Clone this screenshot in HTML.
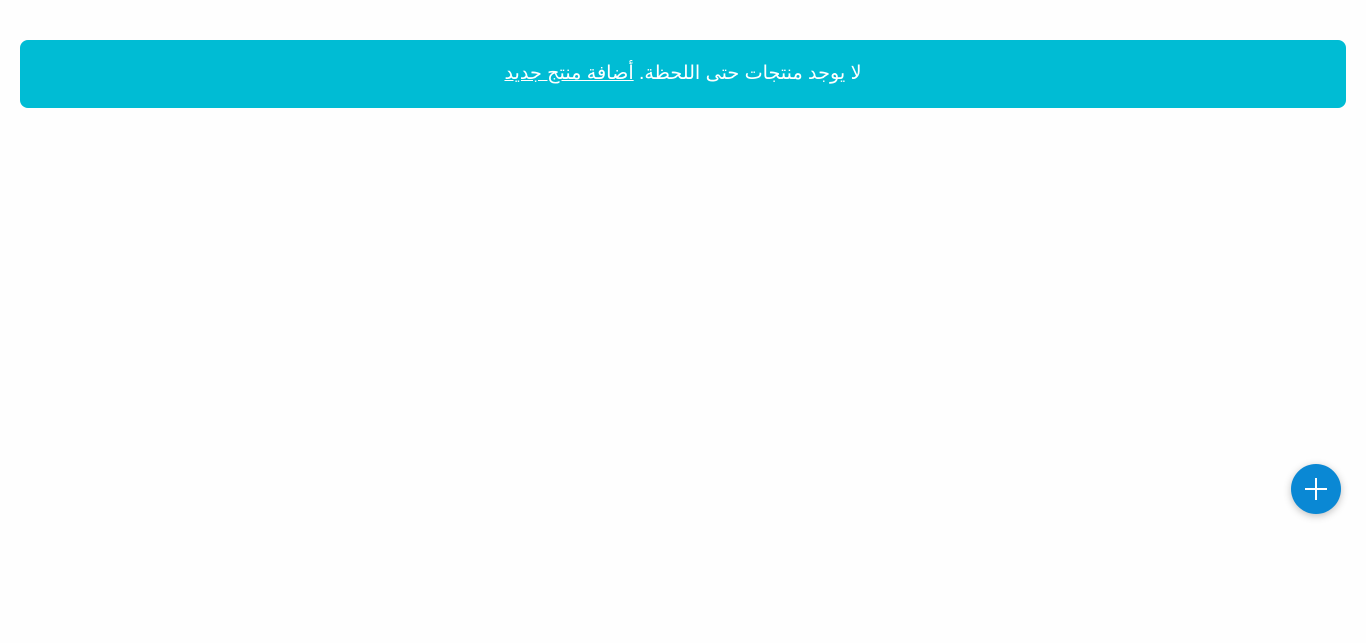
<!DOCTYPE html>
<html dir="rtl" lang="ar">
<head>
<meta charset="utf-8">
<style>
html,body{margin:0;padding:0;background:#fefefe;width:1366px;height:643px;overflow:hidden;}
.alert{position:absolute;left:20px;top:40px;width:1326px;height:68px;background:#00bcd4;border-radius:8px;color:#fff;
font-family:"Liberation Sans","DejaVu Sans",sans-serif;font-size:19.2px;line-height:68px;text-align:center;direction:rtl;}
.alert a{color:#fff;text-decoration:underline;}
.fab{position:absolute;left:1291px;top:464px;width:50px;height:50px;border-radius:50%;background:#0a88d4;
box-shadow:0 2px 8px rgba(0,0,0,0.25);}
.fab svg{position:absolute;left:13px;top:13px;}
</style>
</head>
<body>
<div class="alert">لا يوجد منتجات حتى اللحظة. <a href="#">أضافة منتج جديد</a></div>
<div class="fab"><svg width="24" height="24" viewBox="0 0 24 24"><path d="M12 1V23M1 12H23" stroke="#fff" stroke-width="2" fill="none"/></svg></div>
</body>
</html>
